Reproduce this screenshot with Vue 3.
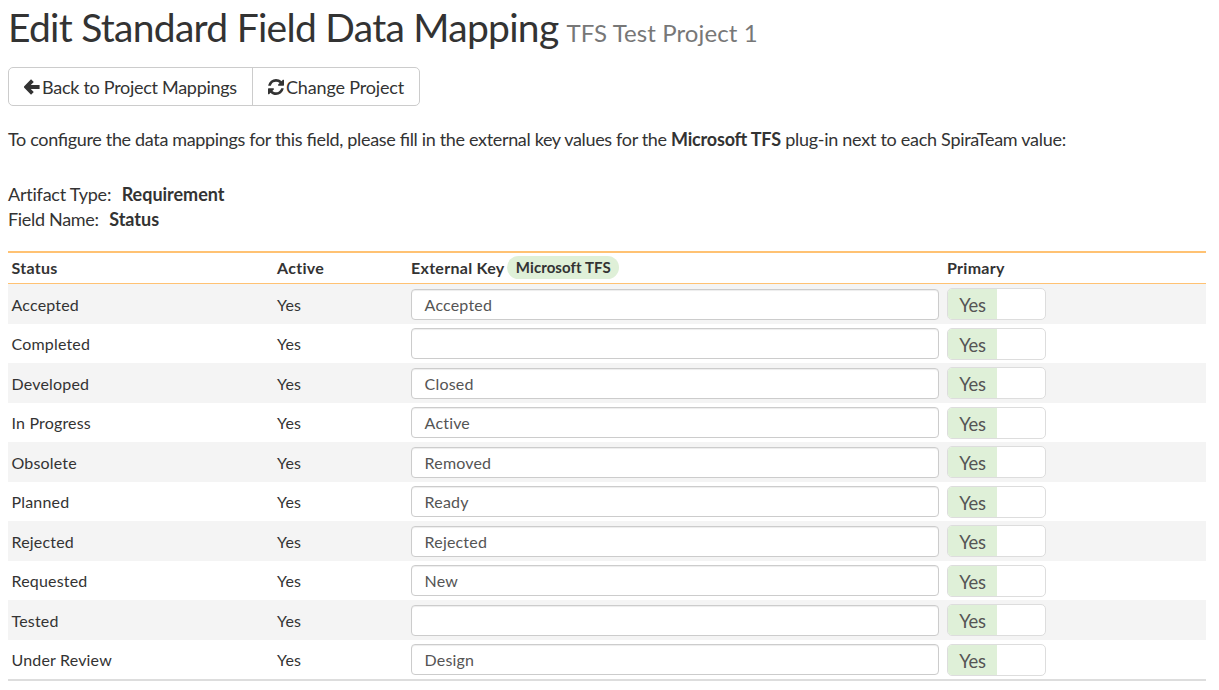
<script setup>
const rows = [
  ['Accepted', 'Accepted'],
  ['Completed', ''],
  ['Developed', 'Closed'],
  ['In Progress', 'Active'],
  ['Obsolete', 'Removed'],
  ['Planned', 'Ready'],
  ['Rejected', 'Rejected'],
  ['Requested', 'New'],
  ['Tested', ''],
  ['Under Review', 'Design'],
].map(([status, key]) => ({ status, key }))
</script>

<template>
  <main class="page">
    <h1><span class="title">Edit Standard Field Data Mapping</span><small>TFS Test Project 1</small></h1>
    <div class="btn-group">
      <button class="btn back" type="button">
        <svg class="icon" width="16" height="16" viewBox="0 0 16 16"><path d="M8.4 1.6 L2.2 8 L8.4 14.4 M2.5 8 H15.6" fill="none" stroke="#333" stroke-width="3.8" /></svg>
        <span>Back to Project Mappings</span>
      </button>
      <button class="btn change" type="button">
        <svg class="icon" width="16" height="16" viewBox="0 0 1536 1536">
          <path fill="#333" d="M1511 928q0 5-1 7-64 268-268 434.500T764 1536q-146 0-282.500-55T238 1324l-129 129q-19 19-45 19t-45-19-19-45V960q0-26 19-45t45-19h448q26 0 45 19t19 45-19 45l-137 137q71 66 161 102t187 36q134 0 250-65t186-179q11-17 53-117 8-23 30-23h192q13 0 22.500 9.500t9.500 22.500zm25-800v448q0 26-19 45t-45 19h-448q-26 0-45-19t-19-45 19-45l138-138Q969 256 768 256q-134 0-250 65T332 500q-11 17-53 117-8 23-30 23H50q-13 0-22.500-9.500T18 608v-7q65-268 270-434.500T768 0q146 0 284 55.500T1297 212l130-129q19-19 45-19t45 19 19 45z" />
        </svg>
        <span>Change Project</span>
      </button>
    </div>
    <p class="intro">To configure the data mappings for this field, please fill in the external key values for the <b>Microsoft TFS</b><span class="rest"> plug-in next to each SpiraTeam value:</span></p>
    <div class="meta">
      <div>Artifact Type:<b>Requirement</b></div>
      <div>Field Name:<b>Status</b></div>
    </div>
    <section class="grid">
      <div class="row head">
        <span>Status</span>
        <span>Active</span>
        <span class="ext">External Key <em class="badge">Microsoft TFS</em></span>
        <span>Primary</span>
      </div>
      <div v-for="r in rows" :key="r.status" class="row item">
        <span class="cell">{{ r.status }}</span>
        <span class="cell">Yes</span>
        <div class="field">{{ r.key }}</div>
        <div class="toggle"><span class="on">Yes</span></div>
      </div>
    </section>
  </main>
</template>

<style>
body { background: #fff; }
</style>

<style scoped>
.page {
  box-sizing: border-box;
  width: 1219px;
  height: 690px;
  overflow: hidden;
  padding: 0 13px 0 8px;
  font-family: Lato, "Liberation Sans", sans-serif;
  font-size: 18px;
  color: #333;
}
h1 {
  margin: 0;
  height: 67px;
  line-height: 55px;
  font-size: 39px;
  font-weight: 400;
  white-space: nowrap;
}
.title { letter-spacing: -0.72px; }
small { margin-left: 8px; font-size: 24px; letter-spacing: 0.1px; color: #777; }
.btn-group {
  display: inline-flex;
  box-sizing: border-box;
  height: 39px;
  border: 1px solid #ccc;
  border-radius: 5px;
}
.btn {
  display: flex;
  align-items: center;
  box-sizing: border-box;
  margin: 0;
  padding: 0 0 0 15px;
  gap: 2px;
  border: 0;
  background: none;
  font: inherit;
  color: #333;
  white-space: nowrap;
}
.back { width: 243px; letter-spacing: -0.28px; }
.change { width: 167px; border-left: 1px solid #ccc; padding-left: 15px; letter-spacing: -0.16px; }
.icon { flex: none; }
.intro {
  margin: 21px 0 0;
  line-height: 25px;
  white-space: nowrap;
  letter-spacing: -0.335px;
  font-feature-settings: "liga" 1;
}
.intro b { letter-spacing: -0.2px; }
.rest { letter-spacing: -0.28px; }
.meta { margin-top: 30px; height: 69px; line-height: 25px; white-space: nowrap; letter-spacing: -0.22px; }
.meta b { margin-left: 10.5px; letter-spacing: -0.02px; }
.meta div + div { letter-spacing: -0.31px; }
.grid { border-top: 2px solid #ffc273; border-bottom: 2px solid #ddd; font-size: 16px; letter-spacing: 0.18px; }
.row {
  display: grid;
  grid-template-columns: 265.5px 134px 528px 1fr;
  padding-left: 3.5px;
}
.head { height: 30px; line-height: 29px; border-bottom: 1px solid #ffc273; font-weight: 700; letter-spacing: 0.29px; }
.row > :nth-child(4) { margin-left: 8px; }
.badge {
  display: inline-block;
  position: relative;
  top: -1px;
  height: 23px;
  margin-left: -1px;
  padding: 0 8.5px;
  border-radius: 12px;
  background: #dff0d8;
  font-style: normal;
  font-size: 15px;
  line-height: 23px;
  letter-spacing: 0.08px;
}
.item { height: 39.5px; }
.item:nth-child(even) { background: #f4f4f4; }
.cell { padding-top: 0.9px; line-height: 40px; height: 38px; }
.field {
  box-sizing: border-box;
  height: 31px;
  margin-top: 4.9px;
  padding-left: 12.6px;
  border: 1px solid #ccc;
  border-radius: 4px;
  background: #fff;
  box-shadow: inset 0 1px 1px rgba(0, 0, 0, 0.075);
  line-height: 30px;
  color: #555;
}
.toggle {
  box-sizing: border-box;
  width: 99px;
  height: 32px;
  margin-top: 4px;
  border: 1px solid #ddd;
  border-radius: 5px;
  background: #fff;
  overflow: hidden;
}
.on {
  display: block;
  width: 49px;
  height: 30px;
  background: #dff0d8;
  font-size: 18.4px;
  letter-spacing: -0.2px;
  line-height: 32px;
  text-align: center;
  color: #555;
}
</style>
